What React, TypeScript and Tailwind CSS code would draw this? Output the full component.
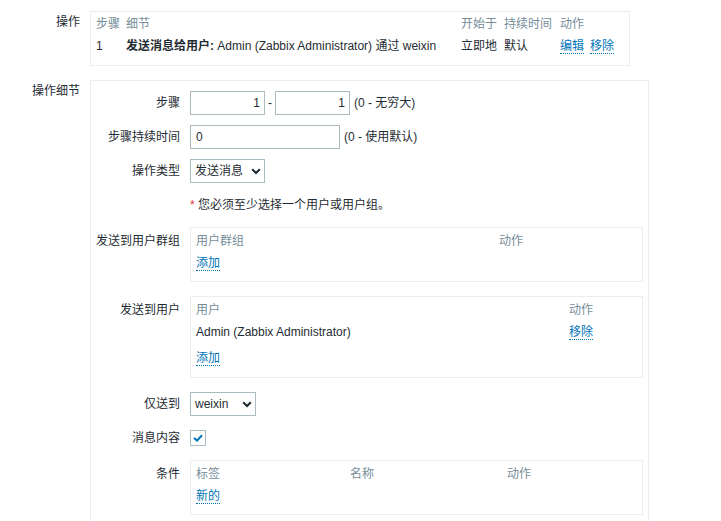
import React from "react";

const FONT = { fontFamily: '"Liberation Sans", Arial, "Noto Sans CJK SC", sans-serif' };

function Link({ children }: { children: React.ReactNode }) {
  return (
    <span className="inline-block leading-[14px] text-[#0275b8] border-b border-dotted border-[#0275b8]">
      {children}
    </span>
  );
}

function Chevron() {
  return (
    <svg width="10" height="7" viewBox="0 0 10 7" className="shrink-0">
      <path d="M1.2 1.3 L5 5 L8.8 1.3" fill="none" stroke="#1f2c33" strokeWidth="2.1" />
    </svg>
  );
}

function Select({ value, width }: { value: string; width: string }) {
  return (
    <div
      className={`${width} h-[24px] box-border border border-[#acbbc2] bg-white flex items-center justify-between pl-[4px] pr-[3px]`}
    >
      <span className="leading-[22px]">{value}</span>
      <Chevron />
    </div>
  );
}

function Row({
  label,
  labelClass = "leading-[24px]",
  className = "",
  children,
}: {
  label: string;
  labelClass?: string;
  className?: string;
  children: React.ReactNode;
}) {
  return (
    <div className={`flex ${className}`}>
      <div className={`w-[89px] shrink-0 text-right ${labelClass}`}>{label}</div>
      <div className="ml-[10px]">{children}</div>
    </div>
  );
}

export default function App() {
  return (
    <div className="w-[721px] h-[521px] overflow-hidden bg-white text-[12px] text-[#1f2c33]" style={FONT}>
      {/* 操作 */}
      <div className="flex pt-[11px]">
        <div className="w-[80px] text-right leading-[22px]">操作</div>
        <div className="ml-[10px] w-[540px] h-[55px] box-border border border-[#ebeef0] pt-[1px] px-[5px]">
          <div className="flex h-[22px] items-center text-[#768d99]">
            <div className="w-[30px]">步骤</div>
            <div className="w-[335px]">细节</div>
            <div className="w-[43px]">开始于</div>
            <div className="w-[56px]">持续时间</div>
            <div>动作</div>
          </div>
          <div className="flex h-[22px] items-center">
            <div className="w-[30px]">1</div>
            <div className="w-[335px]">
              <span className="font-bold">发送消息给用户:</span> Admin (Zabbix Administrator) 通过 weixin
            </div>
            <div className="w-[43px]">立即地</div>
            <div className="w-[56px]">默认</div>
            <div className="flex gap-[6px]">
              <Link>编辑</Link>
              <Link>移除</Link>
            </div>
          </div>
        </div>
      </div>

      {/* 操作细节 */}
      <div className="flex mt-[14px]">
        <div className="w-[80px] text-right leading-[22px]">操作细节</div>
        <div className="ml-[10px] w-[559px] box-border border-l border-t border-r border-[#ebeef0] pt-[10px] pb-[40px]">
          <Row label="步骤">
            <div className="flex items-center">
              <div className="w-[75px] h-[24px] box-border border border-[#acbbc2] text-right pr-[4px] leading-[22px]">1</div>
              <div className="w-[10px] text-center">-</div>
              <div className="w-[75px] h-[24px] box-border border border-[#acbbc2] text-right pr-[4px] leading-[22px]">1</div>
              <span className="ml-[4px]">(0 - 无穷大)</span>
            </div>
          </Row>
          <Row label="步骤持续时间" className="mt-[10px]">
            <div className="flex items-center">
              <div className="w-[150px] h-[24px] box-border border border-[#acbbc2] pl-[5px] leading-[22px]">0</div>
              <span className="ml-[4px]">(0 - 使用默认)</span>
            </div>
          </Row>
          <Row label="操作类型" className="mt-[10px]">
            <Select value="发送消息" width="w-[75px]" />
          </Row>
          <Row label="" className="mt-[10px]">
            <div className="leading-[24px]">
              <span className="text-[#e33734]">*</span> 您必须至少选择一个用户或用户组。
            </div>
          </Row>
          <Row label="发送到用户群组" labelClass="leading-[22px] pt-[3px]" className="mt-[10px]">
            <div className="w-[453px] h-[55px] box-border border border-[#ebeef0] pt-[2px] px-[5px]">
              <div className="flex h-[22px] items-center text-[#768d99]">
                <div className="w-[303px]">用户群组</div>
                <div>动作</div>
              </div>
              <div className="flex h-[22px] items-center">
                <Link>添加</Link>
              </div>
            </div>
          </Row>
          <Row label="发送到用户" labelClass="leading-[22px] pt-[3px]" className="mt-[14px]">
            <div className="w-[453px] h-[82px] box-border border border-[#ebeef0] pt-[2px] px-[5px]">
              <div className="flex h-[22px] items-center text-[#768d99]">
                <div className="w-[373px]">用户</div>
                <div>动作</div>
              </div>
              <div className="flex h-[22px] items-center">
                <div className="w-[373px]">Admin (Zabbix Administrator)</div>
                <Link>移除</Link>
              </div>
              <div className="flex h-[22px] items-center mt-[4px]">
                <Link>添加</Link>
              </div>
            </div>
          </Row>
          <Row label="仅送到" className="mt-[14px]">
            <Select value="weixin" width="w-[66px]" />
          </Row>
          <Row label="消息内容" className="mt-[10px]">
            <div className="h-[24px] flex items-center">
              <div className="w-[16px] h-[16px] box-border border border-[#acbbc2] flex items-center justify-center">
                <svg width="10" height="8" viewBox="0 0 10 8">
                  <path d="M1 4 L4 6.6 L9 1.2" fill="none" stroke="#0275b8" strokeWidth="2" />
                </svg>
              </div>
            </div>
          </Row>
          <Row label="条件" labelClass="leading-[22px] pt-[3px]" className="mt-[10px]">
            <div className="w-[453px] h-[55px] box-border border border-[#ebeef0] pt-[2px] px-[5px]">
              <div className="flex h-[22px] items-center text-[#768d99]">
                <div className="w-[154px]">标签</div>
                <div className="w-[157px]">名称</div>
                <div>动作</div>
              </div>
              <div className="flex h-[22px] items-center">
                <Link>新的</Link>
              </div>
            </div>
          </Row>
        </div>
      </div>
    </div>
  );
}
